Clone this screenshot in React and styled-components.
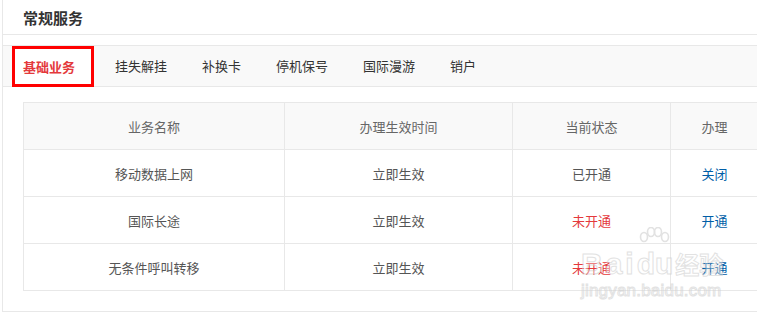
import styled, { createGlobalStyle } from "styled-components";

const GlobalStyle = createGlobalStyle`
  html, body {
    margin: 0;
    padding: 0;
    background: #fff;
    overflow: hidden;
  }
  body {
    font-family: "Noto Sans CJK SC", "Noto Sans", "Liberation Sans", sans-serif;
    font-size: 13px;
    color: #333;
  }
`;

const Panel = styled.div`
  position: relative;
  margin-left: 2px;
  width: 820px;
  border-left: 1px solid #e8e8e8;
  border-bottom: 1px solid #e8e8e8;
  box-sizing: border-box;
`;

const PanelHeader = styled.div`
  height: 34px;
  padding-left: 20px;
  display: flex;
  align-items: center;
  border-bottom: 1px solid #e8e8e8;
  font-size: 15px;
  font-weight: bold;
  color: #333;
`;

const PanelBody = styled.div`
  padding: 10px 0 20px;
`;

const TabBar = styled.ul`
  list-style: none;
  margin: 0;
  padding: 0 0 0 9px;
  height: 40px;
  display: flex;
  align-items: flex-start;
  background: #f9f9f9;
  border-top: 1px solid #e8e8e8;
  border-bottom: 1px solid #e8e8e8;
`;

const Tab = styled.li`
  height: ${(p) => (p.$active ? "35px" : "40px")};
  line-height: ${(p) => (p.$active ? "35px" : "40px")};
  margin-right: ${(p) => (p.$active ? "21px" : "35px")};
  padding: ${(p) => (p.$active ? "0 16px 0 8px" : "0")};
  border: ${(p) => (p.$active ? "3px solid #ff0000" : "none")};
  background: ${(p) => (p.$active ? "#fff" : "transparent")};
  color: ${(p) => (p.$active ? "#e4393c" : "#333")};
  font-weight: ${(p) => (p.$active ? "bold" : "normal")};
  cursor: pointer;
  white-space: nowrap;
`;

const TableWrap = styled.div`
  margin: 15px 0 0 20px;
`;

const Table = styled.table`
  width: 735px;
  border-collapse: collapse;
  table-layout: fixed;
  color: #666;
`;

const Th = styled.th`
  height: 46px;
  padding: 0;
  font-weight: normal;
  text-align: center;
  background: #f9f9f9;
  border: 1px solid #e8e8e8;
`;

const Td = styled.td`
  height: 46px;
  padding: 0;
  text-align: center;
  border: 1px solid #e8e8e8;
  color: ${(p) => (p.$off ? "#e4393c" : "#555")};
`;

const Action = styled.a`
  color: #005ea7;
  text-decoration: none;
  cursor: pointer;
`;

/* baidu jingyan watermark sitting over the last rows */
const Watermark = styled.div`
  position: absolute;
  left: 578px;
  top: 231px;
  pointer-events: none;
  opacity: 0.6;
  white-space: nowrap;
  color: rgba(255, 255, 255, 0.6);
  -webkit-text-stroke: 1px #cfcfcf;
  font-family: "Liberation Sans", sans-serif;
  font-weight: bold;
`;

const MarkTop = styled.div`
  display: flex;
  align-items: flex-end;
  height: 48px;
`;

const MarkWord = styled.span`
  font-size: 30px;
  line-height: 30px;
  letter-spacing: ${(p) => p.$spacing || "0"};
`;

const MarkDu = styled.span`
  display: flex;
  flex-direction: column;
  align-items: flex-start;
  margin-left: 0;
`;

const MarkCn = styled.span`
  font-family: "Noto Sans CJK SC", sans-serif;
  font-size: 24px;
  line-height: 30px;
  margin-left: 2px;
`;

const MarkUrl = styled.div`
  margin-top: 2px;
  font-size: 17px;
  font-weight: normal;
  letter-spacing: 0.2px;
`;

const tabs = ["基础业务", "挂失解挂", "补换卡", "停机保号", "国际漫游", "销户"];

const rows = [
  { name: "移动数据上网", time: "立即生效", status: "已开通", on: true, action: "关闭" },
  { name: "国际长途", time: "立即生效", status: "未开通", on: false, action: "开通" },
  { name: "无条件呼叫转移", time: "立即生效", status: "未开通", on: false, action: "开通" },
];

const Paw = () => (
  <svg width="34" height="22" viewBox="0 0 34 22">
    <g fill="none" stroke="#cfcfcf" strokeWidth="1.6">
      <ellipse cx="7" cy="10" rx="3.5" ry="4.5" />
      <ellipse cx="14" cy="5" rx="3.5" ry="4.5" />
      <ellipse cx="21" cy="5" rx="3.5" ry="4.5" />
      <ellipse cx="28" cy="10" rx="3.5" ry="4.5" />
    </g>
  </svg>
);

export default function App() {
  return (
    <>
      <GlobalStyle />
      <Panel>
        <PanelHeader>常规服务</PanelHeader>
        <PanelBody>
          <TabBar>
            {tabs.map((t, i) => (
              <Tab key={t} $active={i === 0}>
                {t}
              </Tab>
            ))}
          </TabBar>
          <TableWrap>
            <Table>
              <colgroup>
                <col style={{ width: 261 }} />
                <col style={{ width: 228 }} />
                <col style={{ width: 158 }} />
                <col style={{ width: 88 }} />
              </colgroup>
              <thead>
                <tr>
                  <Th>业务名称</Th>
                  <Th>办理生效时间</Th>
                  <Th>当前状态</Th>
                  <Th>办理</Th>
                </tr>
              </thead>
              <tbody>
                {rows.map((r) => (
                  <tr key={r.name}>
                    <Td>{r.name}</Td>
                    <Td>{r.time}</Td>
                    <Td $off={!r.on}>{r.status}</Td>
                    <Td>
                      <Action>{r.action}</Action>
                    </Td>
                  </tr>
                ))}
              </tbody>
            </Table>
          </TableWrap>
        </PanelBody>
        <Watermark>
          <MarkTop>
            <MarkWord $spacing="3px">Bai</MarkWord>
            <MarkDu>
              <Paw />
              <MarkWord>du</MarkWord>
            </MarkDu>
            <MarkCn>经验</MarkCn>
          </MarkTop>
          <MarkUrl>jingyan.baidu.com</MarkUrl>
        </Watermark>
      </Panel>
    </>
  );
}
